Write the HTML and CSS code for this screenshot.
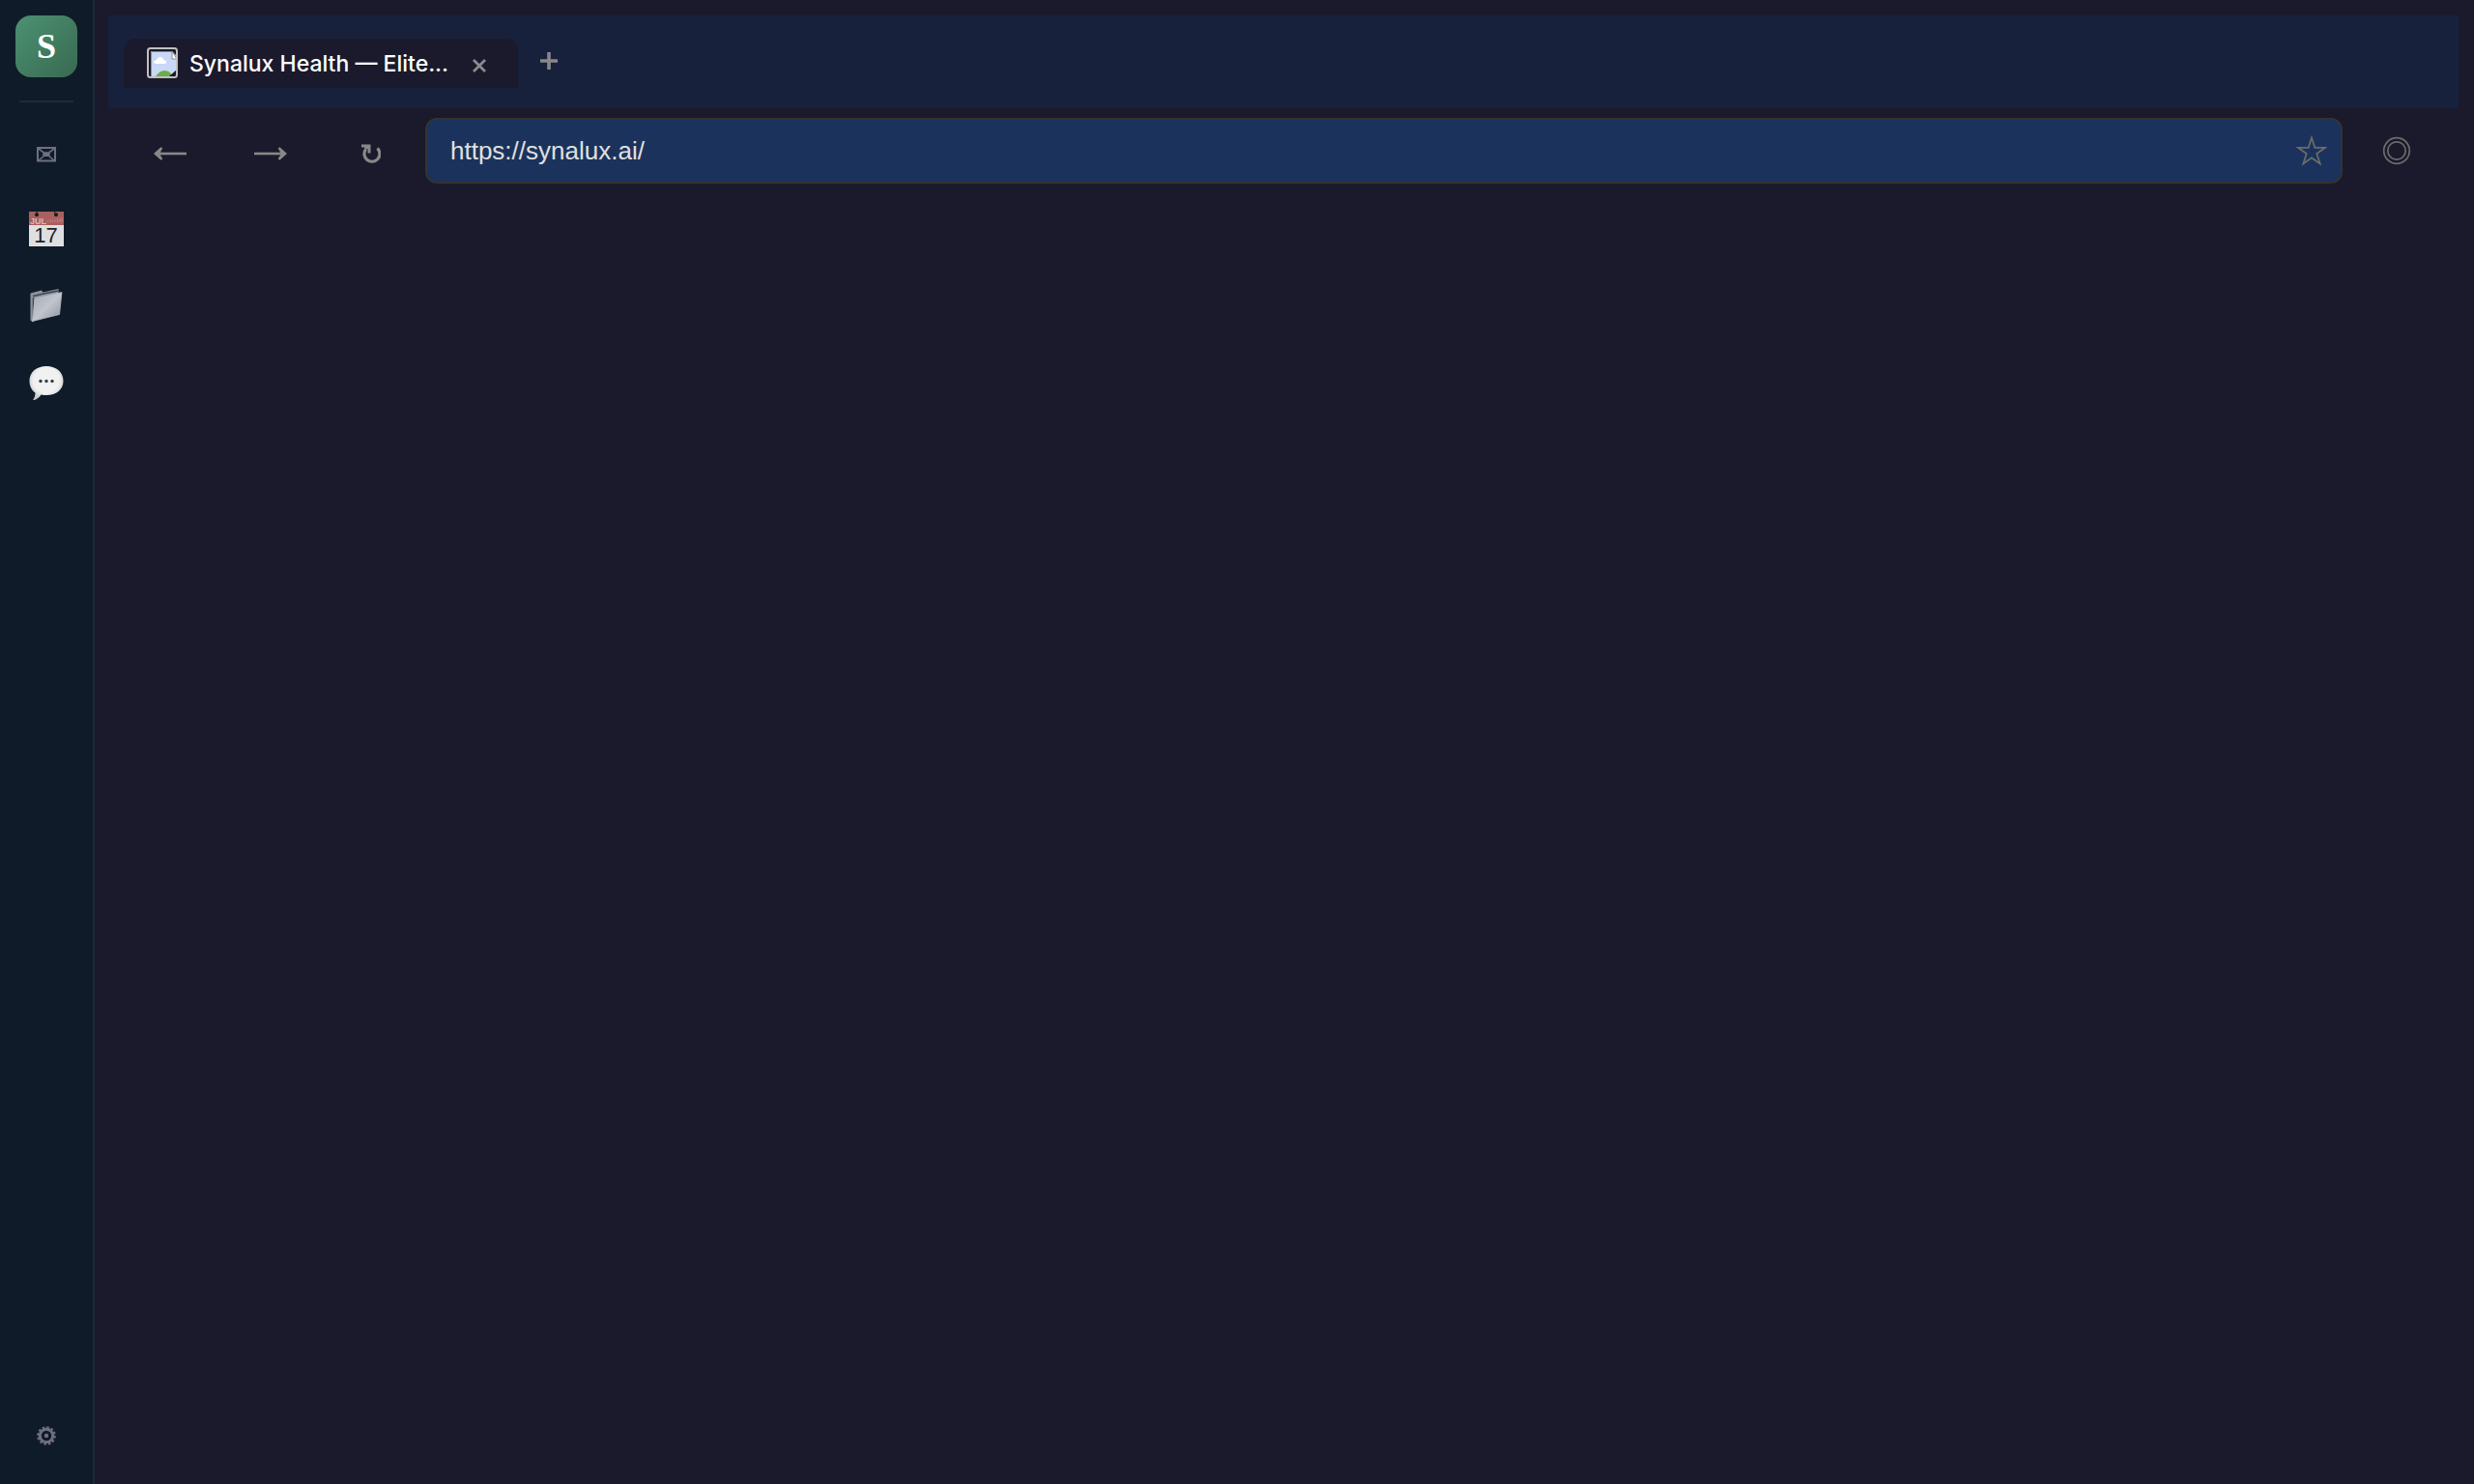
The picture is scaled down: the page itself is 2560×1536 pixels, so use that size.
FILE: index.html
```html
<!DOCTYPE html>
<html lang="en">
<head>
	<meta charset="UTF-8">
	<title>Synalux</title>
	<link rel="stylesheet" href="styles.css">
</head>
<body>
	<nav class="sidebar">
		<a class="logo" href="#">S</a>
		<div class="divider"></div>
		<button class="side-btn low" type="button" aria-label="Mail">
			<svg width="20" height="16" viewBox="0 0 20 16">
				<rect x="1" y="1" width="18" height="13.5" fill="none" stroke="#6f6f80" stroke-width="2"/>
				<path d="M2 2l6 4.5h4L18 2M2 14l6-5h4l6 5" fill="none" stroke="#6f6f80" stroke-width="1.6"/>
				<ellipse cx="10" cy="7.7" rx="3.8" ry="2.4" fill="#6f6f80"/>
			</svg>
		</button>
		<button class="side-btn" type="button" aria-label="Calendar">
			<svg width="36" height="36" viewBox="0 0 36 36">
				<rect width="36" height="36" fill="#dfdfe1"/>
				<rect width="36" height="14" fill="#a9605f"/>
				<path d="M19.5 11V9.5M22 11V8.5M24.5 11V8.5M27 11V8.5M29.5 11V7.5M32 11V7.5M34 11V6.5" stroke="#bf8583" stroke-width="1"/>
				<circle cx="8" cy="3.2" r="2" fill="#101b29"/>
				<circle cx="28" cy="3.2" r="2" fill="#101b29"/>
				<path d="M8 3V0M28 3l-2-3" stroke="#101b29" stroke-width="1"/>
				<text class="cal-month" x="1" y="12.5">JUL</text>
				<text class="cal-day" x="17.5" y="32" text-anchor="middle">17</text>
			</svg>
		</button>
		<button class="side-btn" type="button" aria-label="Files">
			<svg width="36" height="36" viewBox="0 0 36 36">
				<defs>
					<linearGradient id="folder" x1="0" y1="0" x2="1" y2="1">
						<stop offset="0" stop-color="#a1a8b3"/>
						<stop offset=".5" stop-color="#c1c5cc"/>
						<stop offset="1" stop-color="#8d929b"/>
					</linearGradient>
				</defs>
				<path d="M1.5 4.5L13 1.5l1.500 2L30.500 0v5L4 34.500l-2.500-2z" fill="#8b939e"/>
				<path d="M4 7.500l11-2.500 15-3" fill="none" stroke="#3c4652" stroke-width="1.500"/>
				<path d="M4.500 9v22" stroke="#3c4652" stroke-width="1.500"/>
				<path d="M6 10L34 3.500 31.500 26.500 3.500 33.500z" fill="url(#folder)" stroke="#b9bec5" stroke-width=".7"/>
			</svg>
		</button>
		<button class="side-btn" type="button" aria-label="Messages">
			<svg width="36" height="36" viewBox="0 0 36 36">
				<defs>
					<radialGradient id="bubble" cx=".5" cy=".42" r=".58">
						<stop offset=".65" stop-color="#f1f1f2"/>
						<stop offset="1" stop-color="#c4c6c8"/>
					</radialGradient>
				</defs>
				<path d="M18 0C28.500 0 35.500 6.500 35.500 15.200S28.500 30 18 30c-2 0-4-.2-5.500-.6C10.500 32.500 7 35 4 35c1.500-2 2.500-4.500 2.500-7.500C2.500 25 .5 20 .5 15.200.5 6.500 7.500 0 18 0z" fill="url(#bubble)"/>
				<circle cx="12" cy="15.500" r="1.700" fill="#3a3c40"/>
				<circle cx="18" cy="15.500" r="1.700" fill="#3a3c40"/>
				<circle cx="24" cy="15.500" r="1.700" fill="#3a3c40"/>
			</svg>
		</button>
		<button class="side-btn settings" type="button" aria-label="Settings">
			<svg width="20" height="20" viewBox="0 0 20 20">
				<circle cx="10" cy="10" r="6.700" fill="none" stroke="#6f6f80" stroke-width="3"/>
				<circle cx="10" cy="10" r="8.800" fill="none" stroke="#6f6f80" stroke-width="2" stroke-dasharray="2.600 2.007"/>
				<circle cx="10" cy="10" r="2.200" fill="#6f6f80"/>
			</svg>
		</button>
	</nav>
	<main class="browser">
		<div class="tabs">
			<div class="tab">
				<svg class="favicon" width="32" height="32" viewBox="0 0 32 32">
					<path d="M4 4h22l4 4v22H4z" fill="#c8d8f5"/>
					<path d="M4.500 30V4.500h22" fill="none" stroke="#8c8c92" stroke-width="1"/>
					<path d="M9 17c-3-1-2-4 1-4 1-4 7-4 7 0 4 0 4 4 1 4z" fill="#fff"/>
					<path d="M9 30c5-8 14-8 18 0z" fill="#6cae46"/>
					<path d="M23 30l8-7v8z" fill="#1a1a2c"/>
					<path d="M26 4v8h5z" fill="#fff" stroke="#8c8c92"/>
					<path d="M27 2h4v7z" fill="#1a1a2c"/>
					<rect x="1" y="1" width="30" height="30" rx="2.500" fill="none" stroke="#c0c0c0" stroke-width="2"/>
				</svg>
				<span class="tab-title">Synalux Health — Elite...</span>
				<button class="tab-close" type="button" aria-label="Close tab">
					<svg width="14" height="14" viewBox="0 0 14 14">
						<path d="M1 1l12 12M13 1L1 13" stroke="#8a8a90" stroke-width="2.800"/>
					</svg>
				</button>
			</div>
			<button class="tab-new" type="button" aria-label="New tab">
				<svg width="18" height="18" viewBox="0 0 18 18">
					<path d="M9 0v18M0 9h18" stroke="#888" stroke-width="3.600"/>
				</svg>
			</button>
		</div>
		<div class="toolbar">
			<button class="tool-btn low" type="button" aria-label="Back">
				<svg width="34" height="14" viewBox="0 0 34 14">
					<path d="M2 7h32" stroke="#888" stroke-width="2.600"/>
					<path d="M0 7l7.500-6.800 1.800 1.400L6 7l3.300 5.400-1.800 1.400z" fill="#888"/>
				</svg>
			</button>
			<button class="tool-btn low" type="button" aria-label="Forward">
				<svg width="34" height="14" viewBox="0 0 34 14">
					<path d="M0 7h32" stroke="#888" stroke-width="2.600"/>
					<path d="M34 7L26.500.2l-1.800 1.400L28 7l-3.300 5.400 1.800 1.400z" fill="#888"/>
				</svg>
			</button>
			<button class="tool-btn low" type="button" aria-label="Reload">
				<svg width="20" height="20" viewBox="0 0 20 20">
					<path d="M16.500 4.500a8 8 0 1 1-12 1" fill="none" stroke="#888" stroke-width="3.200"/>
					<path d="M0 .5h9.500v9H6.500V5L4 6 3 3.500H0z" fill="#888"/>
				</svg>
			</button>
			<div class="address">
				<input class="url" type="text" value="https://synalux.ai/" aria-label="Address" spellcheck="false">
				<button class="star" type="button" aria-label="Bookmark">
					<svg width="32" height="32" viewBox="0 0 32 32">
						<path d="M16 2.500l3.300 10.300H30L21.300 19l3.400 10.500L16 23.200l-8.700 6.300L10.700 19 2 12.800h10.700z" fill="none" stroke="#6c6c6c" stroke-width="1.700"/>
					</svg>
				</button>
			</div>
			<button class="tool-btn" type="button" aria-label="Profile">
				<svg width="30" height="30" viewBox="0 0 30 30">
					<circle cx="15" cy="15" r="13.300" fill="none" stroke="#6c6c6c" stroke-width="1.700"/>
					<circle cx="15" cy="15" r="9.200" fill="none" stroke="#6c6c6c" stroke-width="1.700"/>
				</svg>
			</button>
		</div>
	</main>
</body>
</html>
```
FILE: styles.css
```css
*{
	box-sizing: border-box;
	margin: 0;
	padding: 0;
}
body{
	display: flex;
	min-height: 100vh;
	background: #1a1a2c;
	font-family: Inter, "Liberation Sans", sans-serif;
}
button{
	display: flex;
	align-items: center;
	justify-content: center;
	border: none;
	background: none;
	cursor: pointer;
}
.sidebar{
	display: flex;
	flex-direction: column;
	align-items: center;
	gap: 16px;
	width: 98px;
	padding: 16px 16px 18px;
	background: #101b29;
	border-right: 2px solid #1f2937;
}
.logo{
	width: 64px;
	height: 64px;
	border-radius: 16px;
	background: linear-gradient(135deg, #4c9173, #386a50);
	color: #fff;
	font: bold 36px/64px "Liberation Serif", serif;
	text-align: center;
	text-decoration: none;
}
.divider{
	width: 56px;
	height: 2px;
	margin: 8px 0 3px;
	background: #1f2937;
}
.side-btn{
	width: 64px;
	height: 64px;
	border-radius: 16px;
}
.settings{
	margin-top: auto;
}
.cal-month{
	font: bold 9px "Liberation Sans", sans-serif;
	fill: #d9b8b8;
}
.cal-day{
	font: 22px "Liberation Sans", sans-serif;
	fill: #222;
}
.browser{
	flex: 1;
	min-width: 0;
	padding: 16px 16px 16px 14px;
}
.tabs{
	display: flex;
	align-items: flex-start;
	height: 96px;
	padding: 24px 16px;
	background: #18213c;
}
.tab{
	display: flex;
	align-items: center;
	gap: 12px;
	padding: 8px 24px 9px;
	border-radius: 12px 12px 0 0;
	background: #1a1a2c;
}
.favicon{
	flex: none;
}
.tab-title{
	width: 272px;
	color: #fff;
	font-size: 23px;
	font-weight: 500;
	line-height: 32px;
	padding-top: 2px;
	white-space: nowrap;
}
.tab-close{
	width: 32px;
	height: 32px;
	padding-top: 6px;
}
.tab-new{
	width: 64px;
	height: 46px;
}
.toolbar{
	display: flex;
	align-items: center;
	gap: 8px;
	padding: 10px 16px;
}
.tool-btn{
	width: 96px;
	height: 64px;
}
.low{
	padding-top: 6px;
}
.address{
	display: flex;
	flex: 1;
	align-items: center;
	height: 68px;
	padding: 0 14px 0 24px;
	border: 2px solid #333;
	border-radius: 12px;
	background: #1b335c;
}
.url{
	flex: 1;
	min-width: 0;
	border: none;
	outline: none;
	background: none;
	color: #e0e0e0;
	font: 26px/32px "Liberation Sans", sans-serif;
}
.star{
	width: 32px;
	height: 32px;
}
```
